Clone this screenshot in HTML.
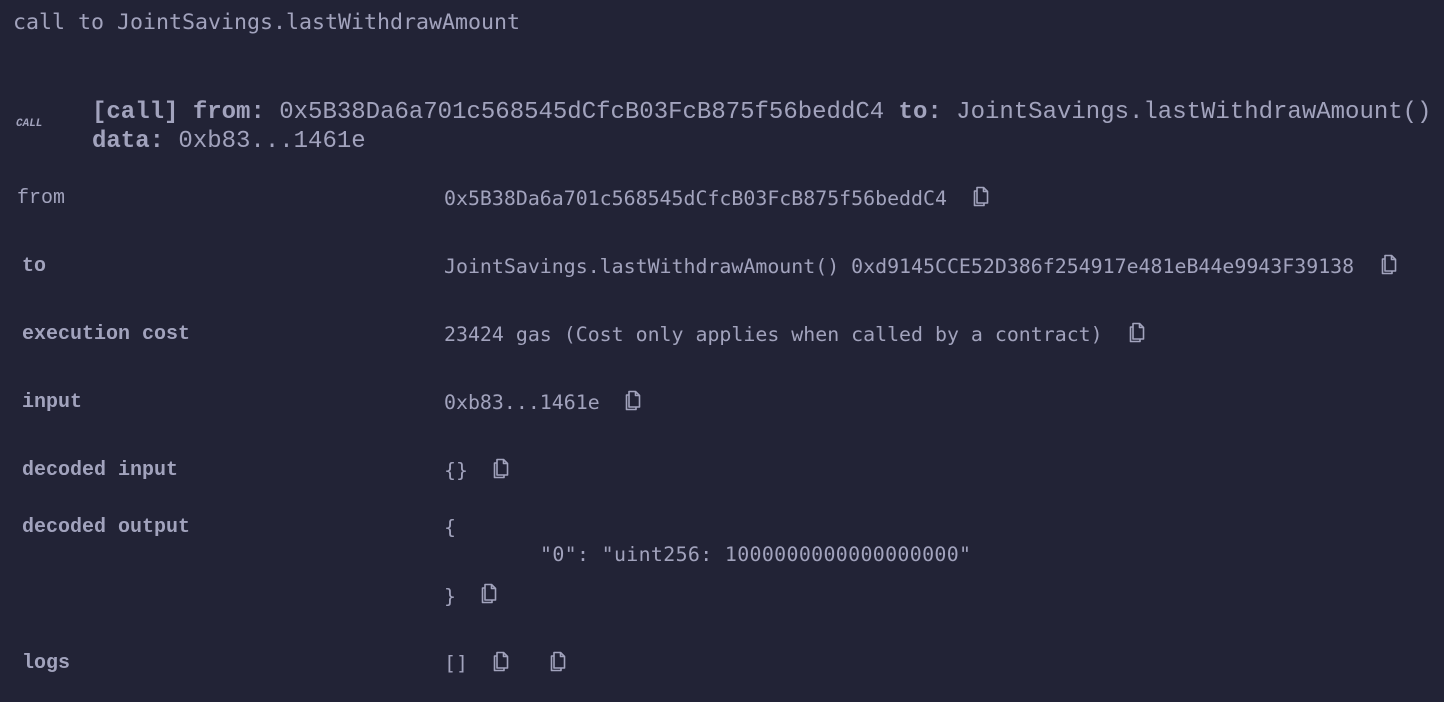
<!DOCTYPE html>
<html><head><style>
body{margin:0;width:1444px;height:702px;background:#222336;color:#a2a3bd;overflow:hidden;position:relative}
.a{position:absolute;white-space:pre;line-height:1}
.dj{font-family:"DejaVu Sans Mono",monospace}
.lm{font-family:"Liberation Mono","Courier New",monospace}
.v{font-family:"DejaVu Sans Mono",monospace;font-size:19.9px}
.l{font-family:"Liberation Mono","Courier New",monospace;font-size:20px;font-weight:bold}
svg.c{position:absolute;width:20px;height:22px}
</style></head><body>
<div class="a dj" style="left:13px;top:12px;font-size:21.6px">call to JointSavings.lastWithdrawAmount</div>
<div class="a lm" style="left:16px;top:119px;font-size:11px;font-style:italic;font-weight:bold">CALL</div>
<div class="a lm" style="left:92px;top:98px;font-size:24px;font-weight:bold;line-height:29px">[call] <span>from:</span> <span style="font-weight:normal">0x5B38Da6a701c568545dCfcB03FcB875f56beddC4</span> to: <span style="font-weight:normal">JointSavings.lastWithdrawAmount()</span>
data: <span style="font-weight:normal">0xb83...1461e</span></div>

<div class="a lm" style="left:17px;top:189px;font-size:20px">from</div>
<div class="a v" style="left:444px;top:189px">0x5B38Da6a701c568545dCfcB03FcB875f56beddC4</div>
<div class="a l" style="left:22px;top:257px">to</div>
<div class="a v" style="left:444px;top:257px">JointSavings.lastWithdrawAmount() 0xd9145CCE52D386f254917e481eB44e9943F39138</div>
<div class="a l" style="left:22px;top:325px">execution cost</div>
<div class="a v" style="left:444px;top:325px">23424 gas (Cost only applies when called by a contract)</div>
<div class="a l" style="left:22px;top:393px">input</div>
<div class="a v" style="left:444px;top:393px">0xb83...1461e</div>
<div class="a l" style="left:22px;top:461px">decoded input</div>
<div class="a v" style="left:444px;top:461px">{}</div>
<div class="a l" style="left:22px;top:518px">decoded output</div>
<div class="a v" style="left:444px;top:518px">{</div>
<div class="a v" style="left:540px;top:545px;letter-spacing:0.35px">"0": "uint256: 1000000000000000000"</div>
<div class="a v" style="left:444px;top:587px">}</div>
<div class="a l" style="left:22px;top:654px">logs</div>
<div class="a v" style="left:444px;top:654px">[]</div>

<svg style="display:none"><symbol id="cp" viewBox="0 0 20 22"><g fill="none" stroke="#a2a3bd" stroke-width="1.6" stroke-linejoin="round"><path d="M6 5H3.5V19.5H13V17"/><path d="M6 1.5H12.5L16.5 5.5V17H6Z"/><path d="M12.5 1.5V5.5H16.5"/></g></symbol></svg>
<svg class="c" style="left:971px;top:186px"><use href="#cp"/></svg>
<svg class="c" style="left:1379px;top:254px"><use href="#cp"/></svg>
<svg class="c" style="left:1127px;top:322px"><use href="#cp"/></svg>
<svg class="c" style="left:623px;top:390px"><use href="#cp"/></svg>
<svg class="c" style="left:491px;top:458px"><use href="#cp"/></svg>
<svg class="c" style="left:479px;top:583px"><use href="#cp"/></svg>
<svg class="c" style="left:491px;top:651px"><use href="#cp"/></svg>
<svg class="c" style="left:548px;top:651px"><use href="#cp"/></svg>
</body></html>
